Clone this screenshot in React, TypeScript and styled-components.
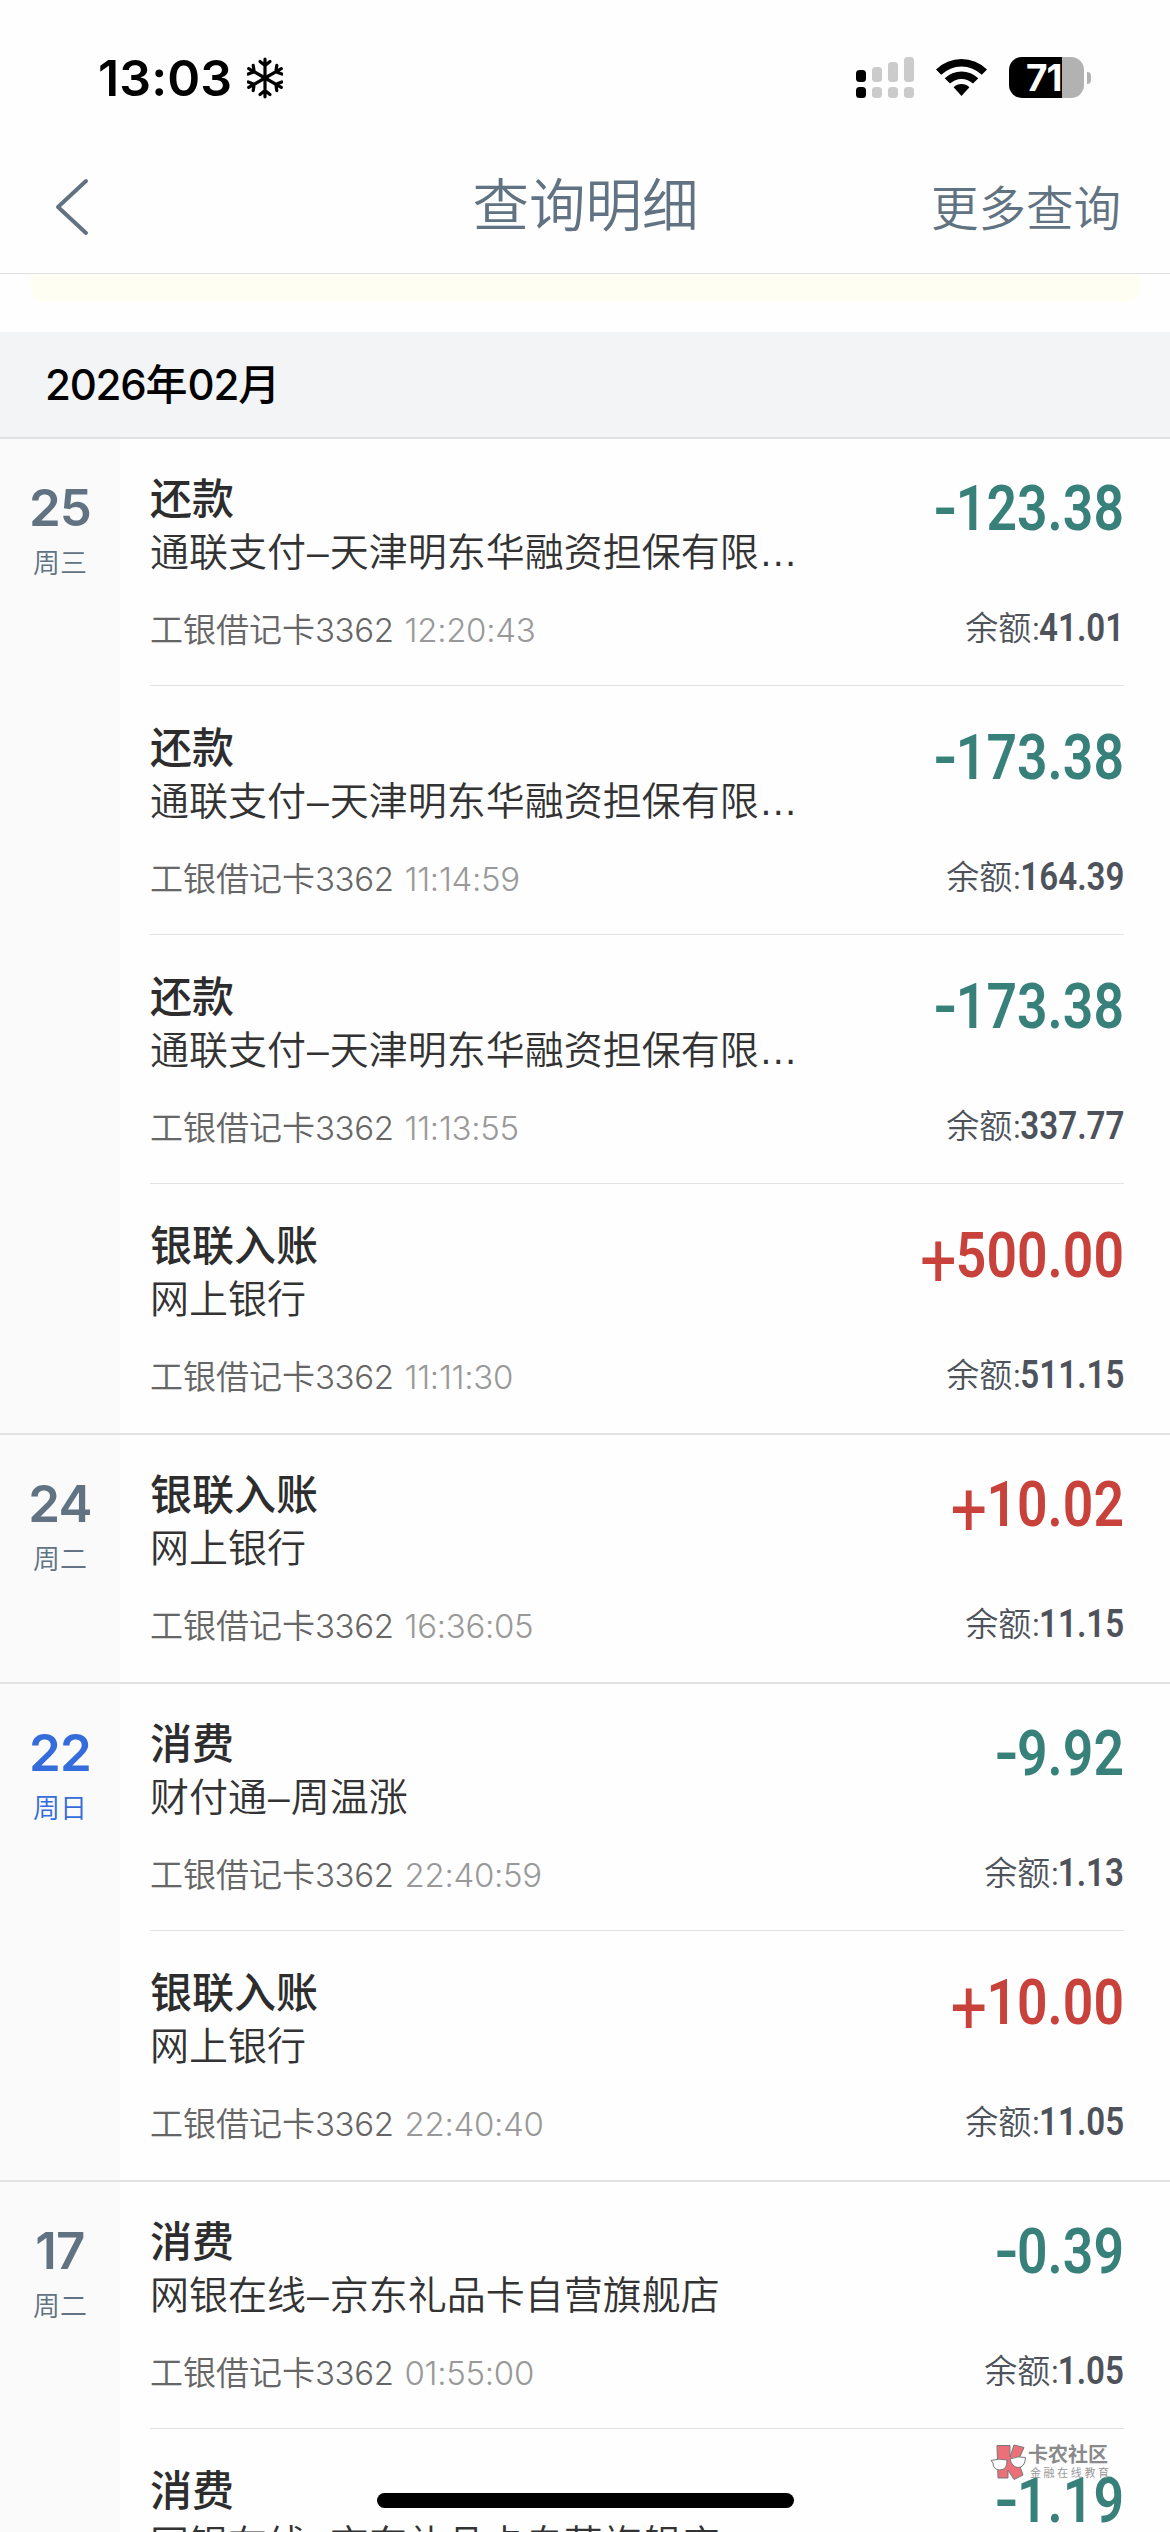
import React, { Fragment } from "react";
import styled, { createGlobalStyle } from "styled-components";

const cjk = `"Noto Sans CJK SC", sans-serif`;
const ui = `Inter, ${cjk}`;

const GlobalStyle = createGlobalStyle`
  html, body { margin: 0; padding: 0; background: #fefefe; overflow: hidden; }
  * { box-sizing: border-box; }
`;

const Screen = styled.main`
  position: relative;
  width: 1170px;
  height: 2532px;
  overflow: hidden;
  background: #fefefe;
  font-family: ${ui};
  display: flex;
  flex-direction: column;
`;

const StatusBar = styled.header`
  flex: none;
  height: 141px;
  padding: 14px 79px 0 98px;
  display: flex;
  align-items: center;
  justify-content: space-between;
  color: #000;
`;

const Clock = styled.div`
  display: flex;
  align-items: center;
  gap: 15px;
  font-size: 50px;
  font-weight: 600;
  line-height: 60px;
  letter-spacing: 0.1px;
`;

const StatusIcons = styled.div`
  display: flex;
  align-items: center;
  gap: 22px;
`;

const BatteryWrap = styled.div`
  display: flex;
  align-items: center;
  gap: 3px;
`;

const BatteryBody = styled.div`
  width: 75px;
  height: 41px;
  border-radius: 13px;
  background: linear-gradient(90deg, #000 53px, #b2b2b2 53px);
  color: #fff;
  font-size: 37px;
  font-weight: 700;
  line-height: 41px;
  letter-spacing: -1px;
  text-indent: 17px;
`;

const BatteryTip = styled.div`
  width: 4px;
  height: 12px;
  border-radius: 0 5px 5px 0;
  background: #b2b2b2;
`;

const NavBar = styled.nav`
  flex: none;
  height: 133px;
  padding: 0 49px 0 54px;
  display: grid;
  grid-template-columns: 1fr auto 1fr;
  align-items: center;
  border-bottom: 1px solid #dfe0e0;
  color: #617382;
  font-weight: 350;
`;

const Back = styled.button`
  display: flex;
  padding: 0;
  border: 0;
  background: none;
  color: inherit;
`;

const Title = styled.h1`
  margin: 0 0 2px -4px;
  font: inherit;
  font-size: 56.5px;
  line-height: 80px;
`;

const More = styled.span`
  justify-self: end;
  padding-top: 4px;
  font-size: 47.5px;
  line-height: 70px;
`;

const Notice = styled.div`
  flex: none;
  height: 28px;
  margin: 0 30px 30px 31px;
  border-radius: 0 0 14px 14px;
  background: #fefef3;
`;

const Month = styled.h2`
  flex: none;
  height: 107px;
  margin: 0;
  padding: 0 0 0 45px;
  border-bottom: 2px solid #e0e1e3;
  background: #f3f4f6;
  color: #000;
  font-size: 42px;
  font-weight: 500;
  line-height: 105px;
`;

const Latin = styled.span<{ $spacing: number }>`
  letter-spacing: ${(p) => p.$spacing}px;
`;

const Day = styled.section`
  flex: none;
  display: flex;
  border-bottom: 2px solid #e1e2e2;
  background: linear-gradient(90deg, #fafafa 120px, #fefefe 120px);
`;

const DateCell = styled.div<{ $weekend?: boolean }>`
  flex: none;
  width: 120px;
  padding-top: 38px;
  text-align: center;
  color: ${(p) => (p.$weekend ? "#356cdb" : "#617382")};
`;

const DayNumber = styled.div`
  font-size: 51px;
  font-weight: 560;
  line-height: 62px;
  letter-spacing: -0.8px;
`;

const Weekday = styled.div`
  margin-top: 5px;
  font-size: 27px;
  font-weight: 350;
  line-height: 40px;
`;

const List = styled.div`
  flex: 1;
  padding: 0 46px 0 30px;
`;

const Row = styled.article`
  height: 249px;
  &:last-child { height: 247px; }
`;

const RowBody = styled.div`
  height: 247px;
  padding-top: 32px;
  border-bottom: 1px solid #e2e3e3;
  ${Row}:last-child & { border-bottom-color: transparent; }
`;

const Line = styled.div`
  display: flex;
  justify-content: space-between;
`;

const Footer = styled(Line)`
  margin-top: 25px;
`;

const Kind = styled.div`
  font-size: 42px;
  font-weight: 500;
  line-height: 55px;
  color: #2d2d2d;
`;

const Party = styled.div`
  height: 53px;
  font-family: "Liberation Sans", ${cjk};
  font-size: 39px;
  font-weight: 350;
  line-height: 53px;
  color: #333;
`;

const Dash = styled.span`
  padding: 0 1px;
`;

const Meta = styled.div`
  display: flex;
  gap: 11px;
  padding-top: 2px;
  font-size: 33px;
  font-weight: 350;
  line-height: 48px;
  color: #666;
`;

const Time = styled.span`
  color: #999;
  letter-spacing: -0.3px;
`;

const Amount = styled.div<{ $income: boolean }>`
  display: flex;
  height: 55px;
  font-family: Roboto, sans-serif;
  font-size: 63px;
  font-weight: 600;
  line-height: 76px;
  transform: scaleX(0.85);
  transform-origin: right center;
  color: ${(p) => (p.$income ? "#c8413a" : "#38807a")};
`;

const Minus = styled.span`
  display: inline-block;
  margin-right: -2px;
  transform: scaleX(1.25);
  transform-origin: right center;
`;

const Plus = styled.span`
  margin-right: -1px;
  font-size: 76px;
  font-weight: 400;
  line-height: 87px;
`;

const Balance = styled.div`
  display: flex;
  font-size: 33px;
  font-weight: 350;
  line-height: 48px;
  color: #4d525b;
`;

/* Narrowed digits: the margin gives back the width that scaleX leaves empty. */
const BalanceValue = styled.span<{ $digits: number }>`
  margin-left: ${(p) => -0.15 * (p.$digits * 0.565 + 0.29) - 0.05}em;
  font-family: Roboto, sans-serif;
  font-size: 39px;
  font-weight: 600;
  transform: scaleX(0.85);
  transform-origin: right center;
`;

const HomeIndicator = styled.div`
  position: absolute;
  left: 377px;
  bottom: 24px;
  width: 417px;
  height: 15px;
  border-radius: 8px;
  background: #000;
`;

const Watermark = styled.div`
  position: absolute;
  left: 990px;
  top: 2444px;
  display: flex;
  gap: 2px;
  color: #8a8a8a;
`;

const MarkName = styled.div`
  font-size: 20px;
  font-weight: 700;
  line-height: 22px;
`;

const MarkSub = styled.div`
  padding-left: 2px;
  font-size: 11px;
  line-height: 14px;
  letter-spacing: 2.6px;
  color: #999;
`;

function Snowflake() {
  return (
    <svg width="36" height="42" viewBox="-18 -21 36 42" fill="none" stroke="#000" strokeWidth="3.200" strokeLinecap="round">
      {[0, 60, 120, 180, 240, 300].map((a) => (
        <path key={a} transform={`rotate(${a})`} d="M0 0V-18.800M-5 -16.500L0 -12.500L5 -16.500" />
      ))}
    </svg>
  );
}

function Signal() {
  const tops = [13, 10, 5, 0];
  return (
    <svg width="58" height="41" viewBox="0 0 58 41">
      {tops.map((t, i) => (
        <g key={i} fill={i === 0 ? "#000" : "#cbcbcb"}>
          <rect x={i * 16} y={t} width="10" height={25 - t} rx="3.500" />
          <rect x={i * 16} y="30" width="10" height="11" rx="3.500" />
        </g>
      ))}
    </svg>
  );
}

function Wifi() {
  return (
    <svg width="51" height="37" viewBox="0 0 51 37" fill="#000">
      <path d="M0 10.500A36.500 36.500 0 0 1 51 10.500L45.800 15.800A29 29 0 0 0 5.200 15.800Z" />
      <path d="M8.700 19.300A24 24 0 0 1 42.300 19.300L37 24.600A16.500 16.500 0 0 0 14 24.600Z" />
      <path d="M17.600 28.200A11.500 11.500 0 0 1 33.400 28.200L25.500 37Z" />
    </svg>
  );
}

function BackArrow() {
  return (
    <svg width="36" height="60" viewBox="0 0 36 60" fill="none" stroke="currentColor" strokeWidth="4" strokeLinecap="round" strokeLinejoin="round">
      <path d="M32 4L4 30L32 56" />
    </svg>
  );
}

function MarkLogo() {
  return (
    <svg width="36" height="37" viewBox="0 0 36 37" stroke="#777" strokeWidth="1">
      <path fill="#ec7079" d="M7 1.500H20V13L24 1L34 3.500L28 17L33 31L24 35.500L18 26V34H8Z" />
      <path fill="#fff" d="M1 16.500Q9 14 17 16Q17.500 26 9.500 26Q3 25.500 3 19Z" />
      <path fill="#fff" d="M20 15Q28 11.500 35.500 13.500Q35 23.500 28 23.500Q22 23 20 15Z" />
    </svg>
  );
}

type Entry = { kind: string; party: string; amount: string; time?: string; balance?: string };
type DayData = { day: string; week: string; weekend?: boolean; entries: Entry[] };

const lender = "通联支付–天津明东华融资担保有限…";
const shop = "网银在线–京东礼品卡自营旗舰店";

const days: DayData[] = [
  {
    day: "25",
    week: "周三",
    entries: [
      { kind: "还款", party: lender, time: "12:20:43", amount: "-123.38", balance: "41.01" },
      { kind: "还款", party: lender, time: "11:14:59", amount: "-173.38", balance: "164.39" },
      { kind: "还款", party: lender, time: "11:13:55", amount: "-173.38", balance: "337.77" },
      { kind: "银联入账", party: "网上银行", time: "11:11:30", amount: "+500.00", balance: "511.15" },
    ],
  },
  {
    day: "24",
    week: "周二",
    entries: [{ kind: "银联入账", party: "网上银行", time: "16:36:05", amount: "+10.02", balance: "11.15" }],
  },
  {
    day: "22",
    week: "周日",
    weekend: true,
    entries: [
      { kind: "消费", party: "财付通–周温涨", time: "22:40:59", amount: "-9.92", balance: "1.13" },
      { kind: "银联入账", party: "网上银行", time: "22:40:40", amount: "+10.00", balance: "11.05" },
    ],
  },
  {
    day: "17",
    week: "周二",
    entries: [
      { kind: "消费", party: shop, time: "01:55:00", amount: "-0.39", balance: "1.05" },
      { kind: "消费", party: shop, amount: "-1.19" },
    ],
  },
];

function Transaction({ entry }: { entry: Entry }) {
  const income = entry.amount[0] === "+";
  return (
    <Row>
      <RowBody>
        <Line>
          <Kind>{entry.kind}</Kind>
          <Amount $income={income}>
            {income ? <Plus>+</Plus> : <Minus>-</Minus>}
            <span>{entry.amount.slice(1)}</span>
          </Amount>
        </Line>
        <Party>
          {entry.party.split("–").map((part, i) => (
            <Fragment key={i}>
              {i > 0 && <Dash>–</Dash>}
              {part}
            </Fragment>
          ))}
        </Party>
        {entry.time && entry.balance && (
          <Footer>
            <Meta>
              <span>
                工银借记卡<Latin $spacing={-0.4}>3362</Latin>
              </span>
              <Time>{entry.time}</Time>
            </Meta>
            <Balance>
              <span>余额:</span>
              <BalanceValue $digits={entry.balance.length - 1}>{entry.balance}</BalanceValue>
            </Balance>
          </Footer>
        )}
      </RowBody>
    </Row>
  );
}

export default function App() {
  return (
    <Screen>
      <GlobalStyle />
      <StatusBar>
        <Clock>
          13:03
          <Snowflake />
        </Clock>
        <StatusIcons>
          <Signal />
          <Wifi />
          <BatteryWrap>
            <BatteryBody>71</BatteryBody>
            <BatteryTip />
          </BatteryWrap>
        </StatusIcons>
      </StatusBar>
      <NavBar>
        <Back aria-label="返回">
          <BackArrow />
        </Back>
        <Title>查询明细</Title>
        <More>更多查询</More>
      </NavBar>
      <Notice />
      <Month>
        <Latin $spacing={-1.2}>2026</Latin>年<Latin $spacing={-1.2}>02</Latin>月
      </Month>
      {days.map((d) => (
        <Day key={d.day}>
          <DateCell $weekend={d.weekend}>
            <DayNumber>{d.day}</DayNumber>
            <Weekday>{d.week}</Weekday>
          </DateCell>
          <List>
            {d.entries.map((e, i) => (
              <Transaction key={i} entry={e} />
            ))}
          </List>
        </Day>
      ))}
      <Watermark>
        <MarkLogo />
        <div>
          <MarkName>卡农社区</MarkName>
          <MarkSub>金融在线教育</MarkSub>
        </div>
      </Watermark>
      <HomeIndicator />
    </Screen>
  );
}
